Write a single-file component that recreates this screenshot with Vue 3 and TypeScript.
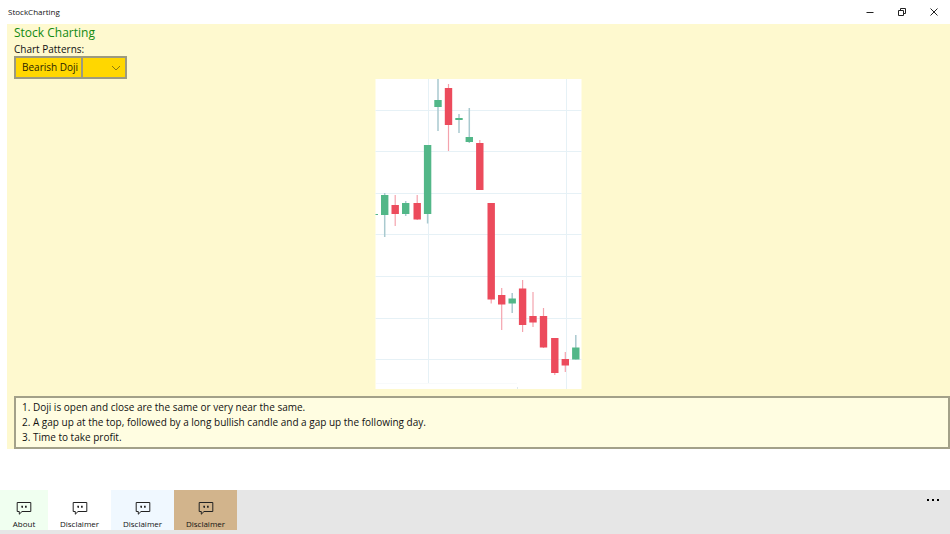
<script setup lang="ts">
import { ref } from 'vue'

interface Candle {
  x: number
  top: number
  bottom: number
  high: number
  low: number
  up: boolean
}

interface Command {
  id: string
  label: string
  tone: string
}

const patterns: string[] = ['Bearish Doji']
const selected = ref<string>(patterns[0])

const notes: string[] = [
  'Doji is open and close are the same or very near the same.',
  'A gap up at the top, followed by a long bullish candle and a gap up the following day.',
  'Time to take profit.',
]

const commands: Command[] = [
  { id: 'about', label: 'About', tone: 'honeydew' },
  { id: 'disclaimer-1', label: 'Disclaimer', tone: 'white' },
  { id: 'disclaimer-2', label: 'Disclaimer', tone: 'alice' },
  { id: 'disclaimer-3', label: 'Disclaimer', tone: 'tan' },
]

const rows: number[] = [31.5, 72.5, 114.5, 155.5, 197.5, 239.5, 280.5]
const columns: number[] = [53.5, 191.5]

// x is the candle centre; the other values are measured down from the chart top
const candles: Candle[] = [
  { x: 9.7, top: 116, bottom: 136, high: 114, low: 158, up: true },
  { x: 20.2, top: 126, bottom: 135, high: 116, low: 147, up: false },
  { x: 30.7, top: 124, bottom: 135, high: 122, low: 137, up: true },
  { x: 42.2, top: 124, bottom: 140.5, high: 116, low: 141, up: false },
  { x: 52.6, top: 66, bottom: 135, high: 66, low: 144.5, up: true },
  { x: 63, top: 21, bottom: 28, high: 0, low: 52, up: true },
  { x: 73.5, top: 9, bottom: 46, high: 5, low: 72, up: false },
  { x: 84, top: 39, bottom: 41, high: 35, low: 54, up: true },
  { x: 94.3, top: 58, bottom: 63, high: 29, low: 64, up: true },
  { x: 104.8, top: 64, bottom: 111, high: 61, low: 111, up: false },
  { x: 116.2, top: 124, bottom: 220.5, high: 124, low: 224.5, up: false },
  { x: 126.7, top: 216, bottom: 225.5, high: 209, low: 251, up: false },
  { x: 137.2, top: 219.5, bottom: 224.5, high: 214, low: 234, up: true },
  { x: 147.6, top: 209.5, bottom: 246, high: 201, low: 253, up: false },
  { x: 158, top: 237, bottom: 243.5, high: 213, low: 248, up: false },
  { x: 168.5, top: 237, bottom: 268.5, high: 229, low: 269, up: false },
  { x: 179.8, top: 259, bottom: 294, high: 259, low: 296, up: false },
  { x: 190.3, top: 280, bottom: 286.5, high: 273, low: 293, up: false },
  { x: 200.8, top: 268.5, bottom: 280.5, high: 256, low: 280.5, up: true },
]
</script>

<template>
  <div class="window">
    <header class="titlebar">
      <span class="app-name">StockCharting</span>
      <div class="window-controls">
        <button type="button" aria-label="Minimize">
          <svg viewBox="0 0 10 10" width="10" height="10"><path d="M1.500 5.500H8.500" /></svg>
        </button>
        <button type="button" aria-label="Restore">
          <svg viewBox="0 0 10 10" width="10" height="10">
            <path d="M1.500 3.500H6.500V8.500H1.500ZM3.500 3.500V1.500H8.500V6.500H6.500" />
          </svg>
        </button>
        <button type="button" aria-label="Close">
          <svg viewBox="0 0 10 10" width="10" height="10"><path d="M1.500 1.500L8.500 8.500M8.500 1.500L1.500 8.500" /></svg>
        </button>
      </div>
    </header>

    <main class="content">
      <div class="heading">
        <h1>Stock Charting</h1>
        <label for="pattern">Chart Patterns:</label>
        <div class="picker">
          <select id="pattern" v-model="selected">
            <option v-for="name in patterns" :key="name">{{ name }}</option>
          </select>
          <svg class="chevron" viewBox="0 0 10 6" width="10" height="6"><path d="M1 1L5 5L9 1" /></svg>
        </div>
      </div>

      <svg class="chart" viewBox="0 0 207 310" width="207" height="310" role="img" aria-label="Candlestick chart">
        <rect x="0.500" width="206" height="310" fill="#fff" />
        <g class="grid">
          <line v-for="y in rows" :key="'r' + y" x1="0.500" x2="206.500" :y1="y" :y2="y" />
          <line :x1="columns[0]" :x2="columns[0]" y1="0" y2="305" />
          <line :x1="columns[1]" :x2="columns[1]" y1="0" y2="310" />
          <path class="axis" d="M1 304.500H142" />
          <path class="tick" d="M142.500 308V310" />
        </g>
        <rect class="up" x="0.500" y="135" width="2.500" height="1" />
        <g v-for="c in candles" :key="c.x" :class="c.up ? 'up' : 'down'">
          <line :x1="c.x" :x2="c.x" :y1="c.high" :y2="c.low" />
          <rect :x="c.x - 3.700" :y="c.top" width="7.400" :height="c.bottom - c.top" />
        </g>
      </svg>

      <ol class="notes">
        <li v-for="(note, i) in notes" :key="note">{{ i + 1 }}. {{ note }}</li>
      </ol>
    </main>

    <footer class="commandbar">
      <button v-for="c in commands" :key="c.id" type="button" class="command" :class="c.tone">
        <svg viewBox="0 0 16 14" width="16" height="14">
          <path class="bubble" d="M1.200 1.500H14.800V10.500H6L3.300 13.200V10.500H1.200Z" />
          <path class="quote" d="M5.300 4.700H7V6.400L6.300 7H5.700V6.300H5.300ZM9 4.700H10.700V6.400L10 7H9.400V6.300H9Z" />
        </svg>
        <span>{{ c.label }}</span>
      </button>
      <button type="button" class="more" aria-label="More">
        <svg viewBox="0 0 14 4" width="14" height="4">
          <rect x="1" y="1" width="2" height="2" />
          <rect x="6" y="1" width="2" height="2" />
          <rect x="11" y="1" width="2" height="2" />
        </svg>
      </button>
    </footer>
  </div>
</template>

<style>
body {
  background: #fff;
}
</style>

<style scoped>
.window {
  display: flex;
  flex-direction: column;
  min-height: 100vh;
  color: #111;
  font-family: "Open Sans", "Noto Sans", sans-serif;
  font-size: 10px;
  line-height: 15px;
}

button {
  margin: 0;
  padding: 0;
  border: 0;
  background: none;
  color: inherit;
  font: inherit;
}

.titlebar {
  display: flex;
  align-items: center;
  justify-content: space-between;
  height: 24px;
  padding-left: 8px;
}

.app-name {
  font-size: 8px;
  line-height: 12px;
}

.window-controls {
  display: flex;
}

.window-controls button {
  display: flex;
  align-items: center;
  justify-content: center;
  width: 32px;
  height: 24px;
}

.window-controls path {
  fill: none;
  stroke: #222;
}

.content {
  display: flex;
  flex-direction: column;
  margin-left: 7px;
  background: #fef9cf;
}

.heading {
  display: flex;
  flex-direction: column;
  align-items: flex-start;
  margin-left: 7px;
}

h1 {
  margin: 0;
  color: #128a12;
  font-size: 12px;
  font-weight: 400;
  line-height: 18px;
}

label {
  line-height: 14px;
}

.picker {
  position: relative;
}

select {
  display: block;
  width: 113px;
  height: 23px;
  padding: 0 40px 0 6px;
  border: 2px solid #9c9a80;
  border-radius: 0;
  appearance: none;
  background: linear-gradient(#9c9a80, #9c9a80) 65px 0 / 2px 100% no-repeat, #ffd700;
  color: #2a2400;
  font: inherit;
}

.chevron {
  position: absolute;
  top: 9px;
  right: 6px;
  pointer-events: none;
}

.chevron path {
  fill: none;
  stroke: #8a7a10;
}

.chart {
  display: block;
  align-self: center;
}

.grid line {
  stroke: #e6f1f6;
}

.axis {
  fill: none;
  stroke: #f8fafb;
}

.tick {
  stroke: #dfe8ec;
}

.up rect,
rect.up {
  fill: #52b788;
}

.up line {
  stroke: #a9c9cf;
  stroke-width: 1.5;
}

.down rect {
  fill: #ec4b5c;
}

.down line {
  stroke: #f4a3ad;
  stroke-width: 1.2;
}

.notes {
  margin: 7px 0 0 7px;
  padding: 2px 6px;
  border: 2px solid #a3a189;
  background: #fffde1;
  list-style: none;
}

.commandbar {
  display: flex;
  align-items: flex-start;
  height: 44px;
  margin-top: auto;
  background: #e6e6e6;
}

.command {
  display: flex;
  flex-direction: column;
  align-items: center;
  gap: 3px;
  width: 63px;
  height: 40px;
  padding-top: 11px;
  font-size: 8px;
  line-height: 12px;
}

.bubble {
  fill: none;
  stroke: #222;
}

.quote {
  fill: #222;
}

.honeydew {
  width: 48px;
  background: #f0fff0;
}

.white {
  background: #fff;
}

.alice {
  background: #f0f8ff;
}

.tan {
  background: #d2b48c;
}

.more {
  display: flex;
  margin-left: auto;
  padding: 8px 10px;
}
</style>
